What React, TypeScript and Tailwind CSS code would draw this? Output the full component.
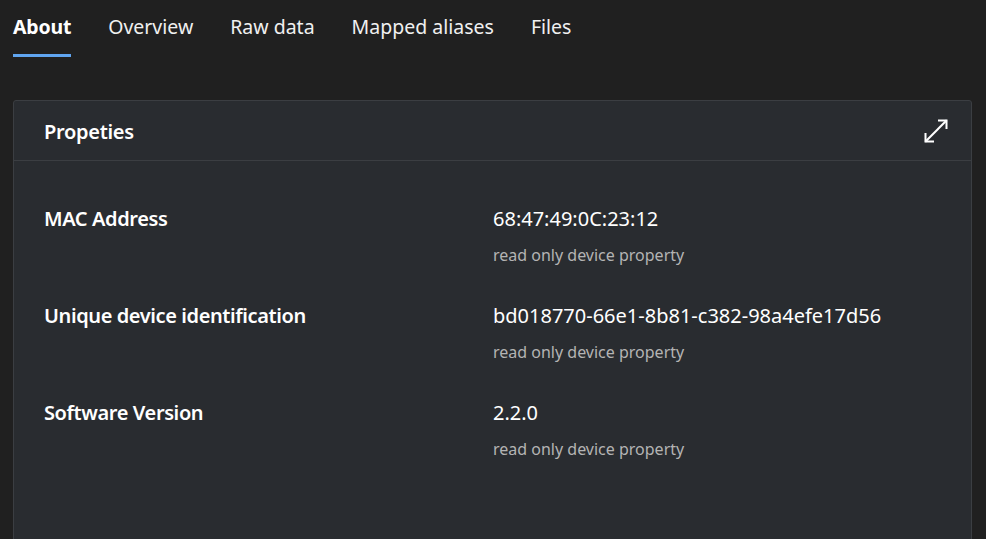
const tabs = ["About", "Overview", "Raw data", "Mapped aliases", "Files"]

const rows = [
  { label: "MAC Address", value: "68:47:49:0C:23:12" },
  { label: "Unique device identification", value: "bd018770-66e1-8b81-c382-98a4efe17d56" },
  { label: "Software Version", value: "2.2.0" },
]

function ExpandIcon() {
  return (
    <svg width="24" height="24" viewBox="0 0 24 24" fill="none" stroke="currentColor" strokeWidth="2" strokeLinecap="square">
      <polyline points="15,1.5 22.5,1.5 22.5,9" />
      <polyline points="9,22.5 1.5,22.5 1.5,15" />
      <line x1="22" y1="2" x2="2" y2="22" />
    </svg>
  )
}

export default function App() {
  return (
    <div
      className="h-[539px] w-[986px] overflow-hidden bg-[#202020] text-white"
      style={{ fontFamily: '"Segoe UI", "Noto Sans", sans-serif' }}
    >
      {/* Tabs */}
      <div className="flex gap-[37px] pl-[13px] pt-[13px]">
        {tabs.map((t, i) => (
          <div key={t} className="flex flex-col">
            <span
              className={`text-[19.5px] leading-[28px] ${i === 0 ? "font-bold tracking-[-0.2px] text-white" : "text-[#f0f0f0]"}`}
            >
              {t}
            </span>
            <div className={`mt-[13px] h-[3px] ${i === 0 ? "bg-[#60a5f0]" : "bg-transparent"}`} />
          </div>
        ))}
      </div>

      {/* Card */}
      <div className="ml-[13px] mr-[14px] mt-[43px] h-[480px] rounded-t-[3px] border border-[#3b3e42] bg-[#292c30]">
        <div className="flex h-[60px] items-center justify-between border-b border-[#3b3e42] pl-[30px] pr-[23px]">
          <span className="pt-[3px] text-[20px] font-semibold tracking-[-0.3px]">Propeties</span>
          <ExpandIcon />
        </div>
        <div className="flex flex-col gap-[34px] pl-[30px] pt-[43px]">
          {rows.map((r) => (
            <div key={r.label} className="flex">
              <div className="w-[449px] text-[20px] font-semibold leading-[30px] tracking-[-0.4px]">{r.label}</div>
              <div className="flex flex-col">
                <span className="text-[20px] leading-[30px]">{r.value}</span>
                <span className="mt-[9px] text-[16px] leading-[24px] text-[#b4b4b4]">
                  read only device property
                </span>
              </div>
            </div>
          ))}
        </div>
      </div>
    </div>
  )
}
